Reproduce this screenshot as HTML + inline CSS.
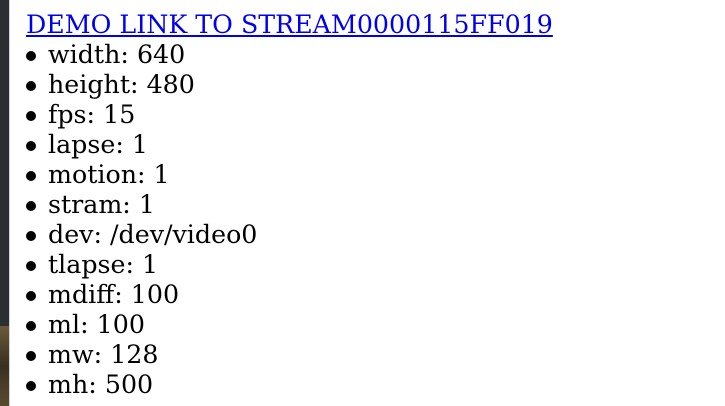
<!DOCTYPE html>
<html><head><style>
html,body{margin:0;padding:0;width:725px;height:406px;overflow:hidden;background:#fff}
.strip{position:absolute;left:0;top:0;width:9px;height:406px;background:#2b2f31}
.strip2{position:absolute;left:0;top:326px;width:9px;height:80px;background:linear-gradient(#6b5a3a,#3a3020,#5a4a30)}
.edge{position:absolute;left:9px;top:0;width:1px;height:406px;background:#cfd2d4}
.c{position:absolute;left:26px;top:10px;font-family:"DejaVu Serif",serif;font-size:25.3px;line-height:30px;color:#000}
a{color:#0000ee}
ul{margin:0;padding-left:22px;list-style:none}
li{position:relative}
li::before{content:"";position:absolute;left:-22px;top:11px;width:10px;height:10px;border-radius:50%;background:#000}
</style></head><body>
<div class="strip"></div><div class="strip2"></div><div class="edge"></div>
<div class="c"><a href="#">DEMO LINK TO STREAM0000115FF019</a>
<ul><li>width: 640</li><li>height: 480</li><li>fps: 15</li><li>lapse: 1</li><li>motion: 1</li><li>stram: 1</li><li>dev: /dev/video0</li><li>tlapse: 1</li><li>mdiff: 100</li><li>ml: 100</li><li>mw: 128</li><li>mh: 500</li></ul></div>
</body></html>
